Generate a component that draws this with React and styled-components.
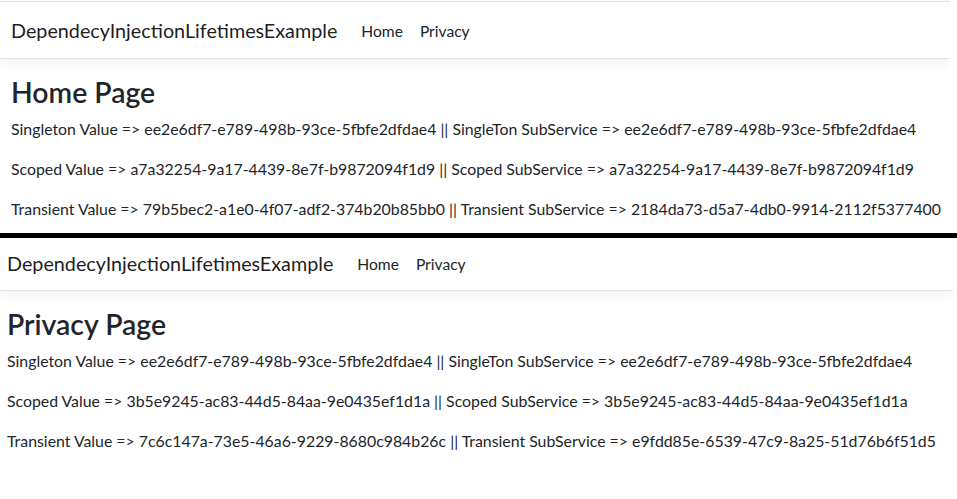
import React from "react";
import styled, { createGlobalStyle } from "styled-components";

const GlobalStyle = createGlobalStyle`
  html, body { margin: 0; padding: 0; background: #fff; }
  body {
    font-family: Lato, "Liberation Sans", sans-serif;
    color: #212529;
    -webkit-font-smoothing: antialiased;
  }
`;

const Page = styled.div`
  width: 957px;
  display: flex;
  flex-direction: column;
`;

const Shot = styled.section`
  width: ${(p) => p.$width}px;
  height: ${(p) => p.$height}px;
  padding-top: ${(p) => p.$top}px;
  box-sizing: border-box;
  overflow: hidden;
  display: flex;
  flex-direction: column;
`;

const Divider = styled.div`
  height: 5px;
  width: 100%;
  background: #000;
`;

const Navbar = styled.header`
  height: ${(p) => p.$height}px;
  box-sizing: content-box;
  padding: 0 0 ${(p) => p.$cut}px ${(p) => p.$left}px;
  display: flex;
  align-items: center;
  background: #fff;
  border-top: ${(p) => (p.$topLine ? "1px solid #dee2e6" : "none")};
  border-bottom: 1px solid #dee2e6;
  box-shadow: 0 4px 12px rgba(0, 0, 0, 0.05);
  position: relative;
  z-index: 1;
  flex-shrink: 0;
`;

const Brand = styled.span`
  font-size: 19.75px;
  line-height: 30px;
  padding-top: 2px;
  color: rgba(0, 0, 0, 0.9);
  margin-right: 16px;
  white-space: nowrap;
`;

const NavList = styled.nav`
  display: flex;
  padding-top: 2px;
`;

const NavLink = styled.span`
  font-size: 15.6px;
  line-height: 24px;
  padding: 8px;
  color: #212529;
  & + & {
    padding-left: 9px;
  }
`;

const Main = styled.main`
  padding-left: ${(p) => p.$left}px;
  padding-top: 16px;
`;

const Title = styled.h1`
  margin: 0 0 8px;
  font-size: 28.4px;
  font-weight: 600;
  line-height: 1.2;
  color: #212529;
`;

const Line = styled.p`
  margin: 0 0 16px;
  font-size: 15.85px;
  line-height: 24px;
  white-space: nowrap;
`;

const shots = [
  {
    title: "Home Page",
    width: 950,
    height: 233,
    top: 1,
    left: 11,
    nav: 56,
    cut: 0,
    topLine: true,
    rows: [
      ["Singleton Value", "ee2e6df7-e789-498b-93ce-5fbfe2dfdae4", "SingleTon SubService", "ee2e6df7-e789-498b-93ce-5fbfe2dfdae4"],
      ["Scoped Value", "a7a32254-9a17-4439-8e7f-b9872094f1d9", "Scoped SubService", "a7a32254-9a17-4439-8e7f-b9872094f1d9"],
      ["Transient Value", "79b5bec2-a1e0-4f07-adf2-374b20b85bb0", "Transient SubService", "2184da73-d5a7-4db0-9914-2112f5377400"],
    ],
  },
  {
    title: "Privacy Page",
    width: 953,
    height: 261,
    top: 0,
    left: 7,
    nav: 50,
    cut: 2,
    topLine: false,
    rows: [
      ["Singleton Value", "ee2e6df7-e789-498b-93ce-5fbfe2dfdae4", "SingleTon SubService", "ee2e6df7-e789-498b-93ce-5fbfe2dfdae4"],
      ["Scoped Value", "3b5e9245-ac83-44d5-84aa-9e0435ef1d1a", "Scoped SubService", "3b5e9245-ac83-44d5-84aa-9e0435ef1d1a"],
      ["Transient Value", "7c6c147a-73e5-46a6-9229-8680c984b26c", "Transient SubService", "e9fdd85e-6539-47c9-8a25-51d76b6f51d5"],
    ],
  },
];

function Screenshot({ s }) {
  return (
    <Shot $width={s.width} $height={s.height} $top={s.top}>
      <Navbar $height={s.nav} $cut={s.cut} $left={s.left} $topLine={s.topLine}>
        <Brand>DependecyInjectionLifetimesExample</Brand>
        <NavList>
          <NavLink>Home</NavLink>
          <NavLink>Privacy</NavLink>
        </NavList>
      </Navbar>
      <Main $left={s.left}>
        <Title>{s.title}</Title>
        {s.rows.map((r, i) => (
          <Line key={i}>
            {r[0]} =&gt; {r[1]} || {r[2]} =&gt; {r[3]}
          </Line>
        ))}
      </Main>
    </Shot>
  );
}

export default function App() {
  return (
    <Page>
      <GlobalStyle />
      <Screenshot s={shots[0]} />
      <Divider />
      <Screenshot s={shots[1]} />
    </Page>
  );
}
